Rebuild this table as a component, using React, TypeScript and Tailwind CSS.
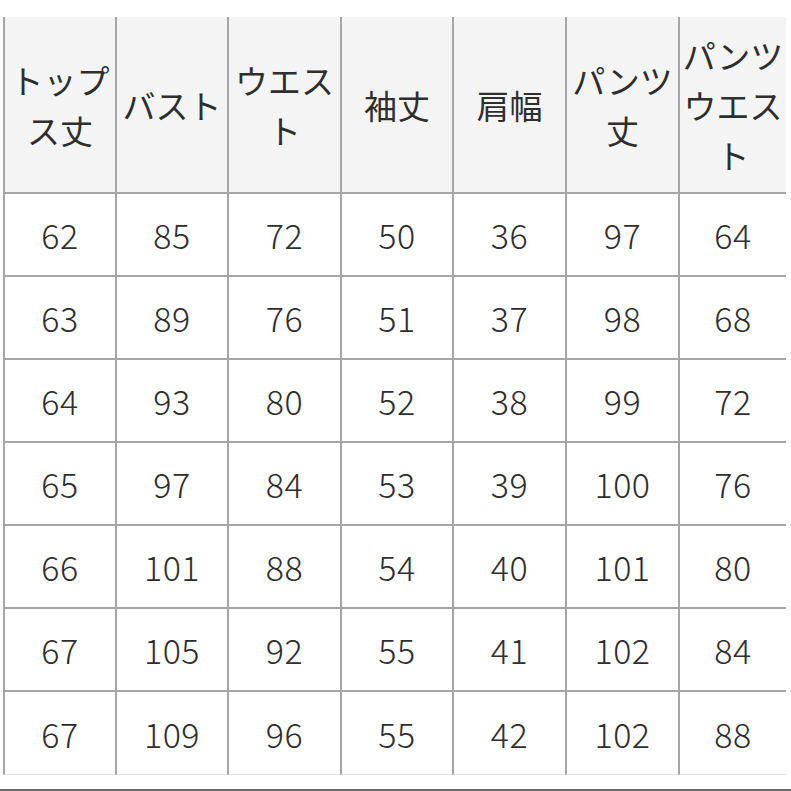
import React from "react";

const headers = ["トップス丈", "バスト", "ウエスト", "袖丈", "肩幅", "パンツ丈", "パンツウエスト"];
const rows = [
  ["62", "85", "72", "50", "36", "97", "64"],
  ["63", "89", "76", "51", "37", "98", "68"],
  ["64", "93", "80", "52", "38", "99", "72"],
  ["65", "97", "84", "53", "39", "100", "76"],
  ["66", "101", "88", "54", "40", "101", "80"],
  ["67", "105", "92", "55", "41", "102", "84"],
  ["67", "109", "96", "55", "42", "102", "88"],
];

export default function App() {
  return (
    <div
      className="w-[791px] h-[791px] bg-white flex flex-col overflow-hidden text-[#2e2e2e]"
      style={{ fontFamily: '"Noto Sans CJK JP", "Noto Sans", sans-serif' }}
    >
      <div className="pt-[17px] pl-[3px]">
        <div className="grid grid-cols-[112px_112px_113px_112px_113px_113px_108px] w-[783px] border-r-2 border-[#a6a6a6]">
          {headers.map((h) => (
            <div
              key={h}
              className="h-[177px] bg-[#f4f4f4] border-l-2 border-b-2 border-[#a6a6a6] flex items-center justify-center px-0 text-center text-[33px] leading-[50px] break-all"
            >
              {h}
            </div>
          ))}
          {rows.map((r, i) =>
            r.map((v, j) => (
              <div
                key={`${i}-${j}`}
                className={`h-[83px] bg-white border-l-2 border-[#a6a6a6] flex items-center justify-center text-[34px] font-light tracking-[0.5px] ${i < rows.length - 1 ? "border-b-2" : "border-b border-b-[#e4e4e4]"}`}
              >
                {v}
              </div>
            ))
          )}
        </div>
      </div>
      <div className="mt-[14px] h-[2px] w-full bg-[#6b6b6b]" />
    </div>
  );
}
